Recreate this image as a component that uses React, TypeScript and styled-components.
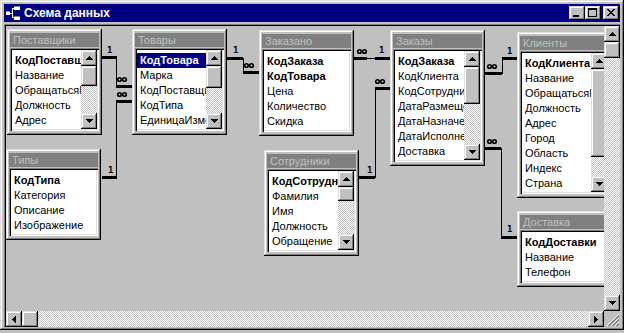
import React from 'react';
import styled, { createGlobalStyle } from 'styled-components';

type Field = { name: string; bold?: boolean; selected?: boolean };
type TableDef = { title: string; x: number; y: number; fields: Field[]; thumb?: number };

const tables: TableDef[] = [
  {
    title: 'Поставщики', x: 1, y: 3, thumb: 20,
    fields: [{ name: 'КодПоставщика', bold: true }, { name: 'Название' }, { name: 'ОбращатьсяК' }, { name: 'Должность' }, { name: 'Адрес' }],
  },
  {
    title: 'Товары', x: 126, y: 3, thumb: 22,
    fields: [{ name: 'КодТовара', bold: true, selected: true }, { name: 'Марка' }, { name: 'КодПоставщика' }, { name: 'КодТипа' }, { name: 'ЕдиницаИзмерения' }],
  },
  {
    title: 'Заказано', x: 253, y: 4,
    fields: [{ name: 'КодЗаказа', bold: true }, { name: 'КодТовара', bold: true }, { name: 'Цена' }, { name: 'Количество' }, { name: 'Скидка' }],
  },
  {
    title: 'Заказы', x: 384, y: 4, thumb: 37,
    fields: [
      { name: 'КодЗаказа', bold: true }, { name: 'КодКлиента' }, { name: 'КодСотрудника' }, { name: 'ДатаРазмещения' },
      { name: 'ДатаНазначения' }, { name: 'ДатаИсполнения' }, { name: 'Доставка' },
    ],
  },
  {
    title: 'Клиенты', x: 511, y: 6, thumb: 88,
    fields: [
      { name: 'КодКлиента', bold: true }, { name: 'Название' }, { name: 'ОбращатьсяК' }, { name: 'Должность' }, { name: 'Адрес' },
      { name: 'Город' }, { name: 'Область' }, { name: 'Индекс' }, { name: 'Страна' },
    ],
  },
  {
    title: 'Типы', x: 0, y: 123,
    fields: [{ name: 'КодТипа', bold: true }, { name: 'Категория' }, { name: 'Описание' }, { name: 'Изображение' }],
  },
  {
    title: 'Сотрудники', x: 258, y: 124, thumb: 14,
    fields: [{ name: 'КодСотрудника', bold: true }, { name: 'Фамилия' }, { name: 'Имя' }, { name: 'Должность' }, { name: 'Обращение' }],
  },
  {
    title: 'Доставка', x: 511, y: 185,
    fields: [{ name: 'КодДоставки', bold: true }, { name: 'Название' }, { name: 'Телефон' }],
  },
];

// relation lines, in page coordinates (canvas origin is 6,26)
const bars: [number, number, number, number][] = [
  [102, 56, 15, 3], [116, 57, 1, 30], [116, 85, 16, 3],
  [102, 176, 15, 3], [116, 101, 1, 77], [116, 100, 16, 3],
  [227, 57, 16, 3], [243, 58, 1, 15], [243, 71, 16, 3],
  [354, 57, 13, 3], [367, 58, 8, 1], [375, 57, 15, 3],
  [359, 176, 16, 3], [375, 88, 1, 90], [375, 87, 15, 3],
  [485, 72, 17, 3], [502, 58, 1, 16], [502, 57, 15, 3],
  [485, 147, 16, 3], [501, 148, 1, 90], [501, 236, 16, 3],
];
const ones: [number, number][] = [[107, 53], [108, 173], [233, 53], [379, 53], [367, 173], [507, 54], [507, 232]];
const manys: [number, number][] = [[117, 77], [117, 92], [244, 63], [357, 49], [375, 79], [487, 64], [487, 139]];

const GlobalStyle = createGlobalStyle`
  html, body {
    margin: 0;
    padding: 0;
    background: #c0c0c0;
  }
  body {
    font-family: "Liberation Sans", Arial, sans-serif;
    font-size: 11px;
  }
`;

const raised = `
  background: #c0c0c0;
  box-shadow: inset -1px -1px #000, inset 1px 1px #dfdfdf, inset -2px -2px #808080, inset 2px 2px #fff;
`;

const checker = `
  background-color: #fff;
  background-image: repeating-conic-gradient(#c0c0c0 0 25%, #fff 0 50%);
  background-size: 2px 2px;
`;

const Window = styled.div`
  width: 624px;
  height: 330px;
  box-sizing: border-box;
  padding: 4px 4px 3px 4px;
  background: #c0c0c0;
  box-shadow: inset -1px -1px #000, inset 1px 1px #dfdfdf, inset -2px -2px #808080, inset 2px 2px #fff;
  display: flex;
  flex-direction: column;
`;

const TitleBar = styled.div`
  flex: none;
  height: 18px;
  background: #000080;
  display: flex;
  align-items: center;
  padding: 0 1px 0 1px;
`;

const Caption = styled.span`
  margin-left: 3px;
  color: #fff;
  font-weight: bold;
  font-size: 12px;
  white-space: nowrap;
`;

const Controls = styled.div`
  margin-left: auto;
  display: flex;
`;

const CapButton = styled.div<{ $gap?: boolean }>`
  ${raised}
  width: 16px;
  height: 14px;
  margin-left: ${p => (p.$gap ? 2 : 0)}px;
  svg {
    display: block;
  }
`;

const Client = styled.div`
  flex: 1;
  min-height: 0;
  margin-top: 2px;
  padding: 2px 0 0 2px;
  box-shadow: inset 1px 1px #808080, inset 2px 2px #000;
  display: grid;
  grid-template-columns: 1fr 16px;
  grid-template-rows: 1fr 16px;
`;

const Canvas = styled.div`
  position: relative;
  overflow: hidden;
`;

const Links = styled.svg`
  position: absolute;
  left: 0;
  top: 0;
  width: 100%;
  height: 100%;
`;

const TableBox = styled.div<{ $x: number; $y: number }>`
  ${raised}
  position: absolute;
  left: ${p => p.$x}px;
  top: ${p => p.$y}px;
  width: 95px;
  box-sizing: border-box;
  padding: 4px 3px;
`;

const TableTitle = styled.div`
  height: 14px;
  line-height: 14px;
  background: #808080;
  color: #c0c0c0;
  padding-left: 3px;
  white-space: nowrap;
  overflow: hidden;
`;

const ListBox = styled.div`
  margin-top: 1px;
  display: flex;
  background: #fff;
  padding: 2px;
  box-shadow: inset 1px 1px #808080, inset 2px 2px #000, inset -1px -1px #fff, inset -2px -2px #dfdfdf;
`;

const Rows = styled.div`
  flex: 1;
  min-width: 0;
  overflow: hidden;
  padding: 3px 0 1px;
`;

const Row = styled.div<{ $bold: boolean; $selected: boolean }>`
  height: 15px;
  line-height: 15px;
  padding-left: 3px;
  white-space: nowrap;
  overflow: hidden;
  font-weight: ${p => (p.$bold ? 'bold' : 'normal')};
  color: ${p => (p.$selected ? '#fff' : '#000')};
  background: ${p => (p.$selected ? '#000080' : 'transparent')};
`;

const ScrollColumn = styled.div`
  width: 16px;
  flex: none;
  display: flex;
  flex-direction: column;
`;

const ScrollRow = styled.div`
  display: flex;
`;

const ScrollButton = styled.div`
  ${raised}
  width: 16px;
  height: 16px;
  flex: none;
  display: flex;
  align-items: center;
  justify-content: center;
  svg {
    display: block;
  }
`;

const Track = styled.div<{ $vertical?: boolean }>`
  ${checker}
  flex: 1;
  display: flex;
  flex-direction: ${p => (p.$vertical ? 'column' : 'row')};
`;

const Thumb = styled.div<{ $size: number; $vertical?: boolean }>`
  ${raised}
  flex: none;
  width: ${p => (p.$vertical ? 16 : p.$size)}px;
  height: ${p => (p.$vertical ? p.$size : 16)}px;
`;

const Grip = styled.div`
  background: #c0c0c0;
  svg {
    display: block;
  }
`;

type Dir = 'up' | 'down' | 'left' | 'right';

function ArrowIcon({ dir }: { dir: Dir }) {
  const vertical = dir === 'up' || dir === 'down';
  const rects = [0, 1, 2, 3].map(i => {
    const len = 2 * i + 1;
    const along = 3 - i;
    if (vertical) {
      const y = dir === 'up' ? i : 3 - i;
      return <rect key={i} x={along} y={y} width={len} height={1} />;
    }
    const x = dir === 'left' ? i : 3 - i;
    return <rect key={i} x={x} y={along} width={1} height={len} />;
  });
  return (
    <svg width={vertical ? 7 : 4} height={vertical ? 4 : 7} fill="#000" shapeRendering="crispEdges">
      {rects}
    </svg>
  );
}

function AppIcon() {
  return (
    <svg width="16" height="16" shapeRendering="crispEdges">
      <rect x="1" y="6" width="4" height="4" fill="#fff" />
      <rect x="1" y="6" width="4" height="1" fill="#808080" />
      <rect x="5" y="8" width="3" height="1" fill="#fff" />
      <rect x="7" y="3" width="1" height="10" fill="#fff" />
      <rect x="9" y="1" width="6" height="4" fill="#fff" />
      <rect x="9" y="1" width="6" height="1" fill="#808080" />
      <rect x="9" y="11" width="6" height="4" fill="#fff" />
      <rect x="9" y="11" width="6" height="1" fill="#808080" />
      <rect x="8" y="3" width="1" height="1" fill="#fff" />
      <rect x="8" y="12" width="1" height="1" fill="#fff" />
    </svg>
  );
}

function Table({ def }: { def: TableDef }) {
  return (
    <TableBox $x={def.x} $y={def.y}>
      <TableTitle>{def.title}</TableTitle>
      <ListBox>
        <Rows>
          {def.fields.map(f => (
            <Row key={f.name} $bold={!!f.bold} $selected={!!f.selected}>
              {f.name}
            </Row>
          ))}
        </Rows>
        {def.thumb !== undefined && (
          <ScrollColumn>
            <ScrollButton><ArrowIcon dir="up" /></ScrollButton>
            <Track $vertical>
              <Thumb $vertical $size={def.thumb} />
            </Track>
            <ScrollButton><ArrowIcon dir="down" /></ScrollButton>
          </ScrollColumn>
        )}
      </ListBox>
    </TableBox>
  );
}

function Relations() {
  return (
    <Links>
      <g transform="translate(-6 -26)" shapeRendering="crispEdges">
        {bars.map(([x, y, w, h], i) => (
          <rect key={i} x={x} y={y} width={w} height={h} fill="#000" />
        ))}
      </g>
      <g transform="translate(-6 -26)">
        {ones.map(([x, y], i) => (
          <text key={i} x={x} y={y} fontSize="9" fontWeight="bold" fontFamily="'DejaVu Sans Mono', monospace" fill="#000">
            1
          </text>
        ))}
        {manys.map(([x, y], i) => (
          <g key={i} fill="none" stroke="#000" strokeWidth="1.6">
            <circle cx={x + 2.5} cy={y + 2.5} r="1.8" />
            <circle cx={x + 7.5} cy={y + 2.5} r="1.8" />
          </g>
        ))}
      </g>
    </Links>
  );
}

export default function App() {
  return (
    <>
      <GlobalStyle />
      <Window>
        <TitleBar>
          <AppIcon />
          <Caption>Схема данных</Caption>
          <Controls>
            <CapButton>
              <svg width="16" height="14" fill="#000" shapeRendering="crispEdges">
                <rect x="4" y="9" width="6" height="2" />
              </svg>
            </CapButton>
            <CapButton>
              <svg width="16" height="14" fill="#000" shapeRendering="crispEdges">
                <rect x="3" y="2" width="9" height="2" />
                <rect x="3" y="4" width="1" height="7" />
                <rect x="11" y="4" width="1" height="7" />
                <rect x="3" y="10" width="9" height="1" />
              </svg>
            </CapButton>
            <CapButton $gap>
              <svg width="16" height="14" fill="#000" shapeRendering="crispEdges">
                {[0, 1, 2, 3, 4, 5, 6].map(i => (
                  <React.Fragment key={i}>
                    <rect x={4 + i} y={3 + i} width="2" height="1" />
                    <rect x={10 - i} y={3 + i} width="2" height="1" />
                  </React.Fragment>
                ))}
              </svg>
            </CapButton>
          </Controls>
        </TitleBar>
        <Client>
          <Canvas>
            <Relations />
            {tables.map(t => (
              <Table key={t.title} def={t} />
            ))}
          </Canvas>
          <ScrollColumn>
            <ScrollButton><ArrowIcon dir="up" /></ScrollButton>
            <Track $vertical>
              <Thumb $vertical $size={16} />
            </Track>
            <ScrollButton><ArrowIcon dir="down" /></ScrollButton>
          </ScrollColumn>
          <ScrollRow>
            <ScrollButton><ArrowIcon dir="left" /></ScrollButton>
            <Track>
              <Thumb $size={16} />
            </Track>
            <ScrollButton><ArrowIcon dir="right" /></ScrollButton>
          </ScrollRow>
          <Grip>
            <svg width="16" height="16" shapeRendering="crispEdges">
              {[12, 8, 4].map(c => (
                <g key={c}>
                  <line x1={15 - c} y1={15} x2={15} y2={15 - c} stroke="#fff" />
                  <line x1={16 - c} y1={15} x2={15} y2={16 - c} stroke="#808080" />
                  <line x1={17 - c} y1={15} x2={15} y2={17 - c} stroke="#808080" />
                </g>
              ))}
            </svg>
          </Grip>
        </Client>
      </Window>
    </>
  );
}
